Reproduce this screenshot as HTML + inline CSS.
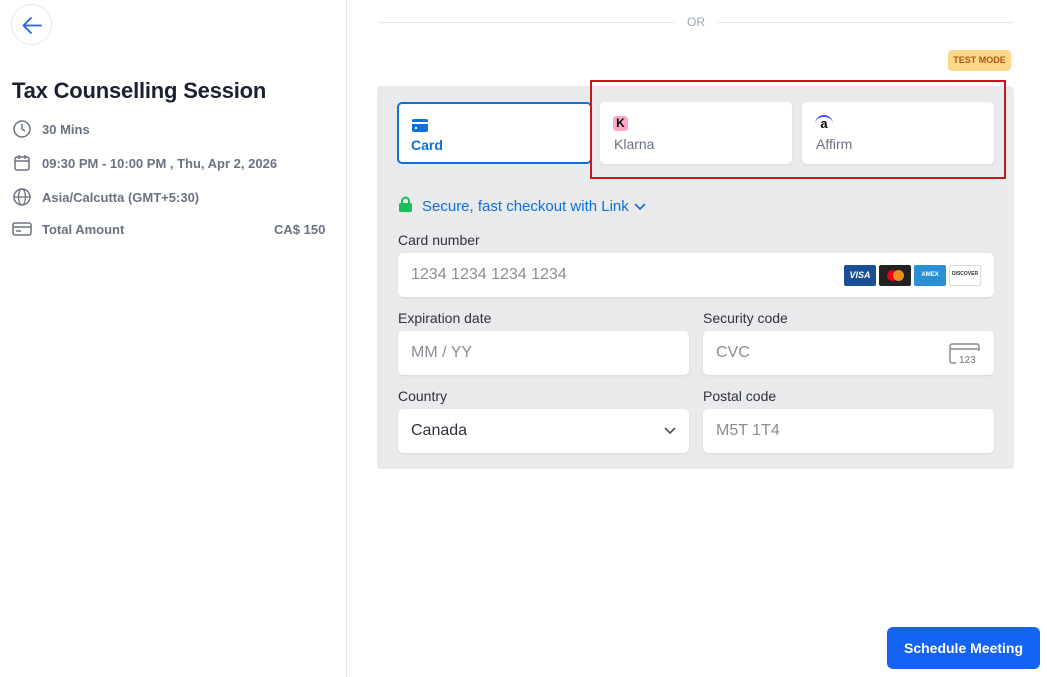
<!DOCTYPE html>
<html><head><style>
*{box-sizing:border-box;margin:0;padding:0}
body{width:1047px;height:677px;background:#fff;font-family:"Liberation Sans",sans-serif;position:relative;overflow:hidden;color:#1a1f2e}
.abs{position:absolute}
.side{left:0;top:0;width:347px;height:677px;border-right:1px solid #e5e7eb}
.back{left:11px;top:4px;width:41px;height:41px;border:1px solid #e5e7eb;border-radius:50%}
.row{left:12px;font-size:13px;color:#6b7280;font-weight:bold;display:flex;align-items:center;gap:10px}
.panel{left:377px;top:86px;width:637px;height:383px;background:#e9eaec;border-radius:4px}
.tab{position:absolute;top:16px;width:192px;height:62px;background:#fff;border-radius:5px;box-shadow:0 1px 2px rgba(0,0,0,.08)}
.tab span{position:absolute;left:14px;top:34px;font-size:14px;color:#6b7280}
.lbl{position:absolute;font-size:14px;color:#30313d}
.inp{position:absolute;height:44px;background:#fff;border-radius:5px;box-shadow:0 1px 2px rgba(0,0,0,.08);font-size:16px;color:#8a8d93;padding:13px 13px}
</style></head><body>
<div class="abs side"></div>
<div class="abs back"><svg width="41" height="41" viewBox="0 0 41 41"><path d="M29 20.5H12M19 13l-7.5 7.5L19 28" stroke="#2563eb" stroke-width="1.8" fill="none" stroke-linecap="round" stroke-linejoin="round"/></svg></div>
<div class="abs" style="left:12px;top:78px;font-size:22px;font-weight:bold;color:#1a2130;letter-spacing:-0.2px">Tax Counselling Session</div>
<div class="abs row" style="top:119px"><svg width="20" height="20" viewBox="0 0 20 20"><circle cx="10" cy="10" r="8" stroke="#6b7280" stroke-width="1.5" fill="none"/><path d="M10 5v5l3 2" stroke="#6b7280" stroke-width="1.5" fill="none"/></svg>30 Mins</div>
<div class="abs row" style="top:153px"><svg width="20" height="20" viewBox="0 0 20 20"><rect x="3" y="4" width="14" height="13" rx="2" stroke="#6b7280" stroke-width="1.5" fill="none"/><path d="M3 8h14M7 2v4M13 2v4" stroke="#6b7280" stroke-width="1.5"/></svg>09:30 PM - 10:00 PM , Thu, Apr 2, 2026</div>
<div class="abs row" style="top:187px"><svg width="20" height="20" viewBox="0 0 20 20"><circle cx="10" cy="10" r="8" stroke="#6b7280" stroke-width="1.5" fill="none"/><ellipse cx="10" cy="10" rx="3.5" ry="8" stroke="#6b7280" stroke-width="1.3" fill="none"/><path d="M2 10h16" stroke="#6b7280" stroke-width="1.3"/></svg>Asia/Calcutta (GMT+5:30)</div>
<div class="abs row" style="top:219px"><svg width="20" height="20" viewBox="0 0 20 20"><rect x="1" y="4" width="18" height="12" rx="2" stroke="#6b7280" stroke-width="1.5" fill="none"/><path d="M1 8h18M4 12h5" stroke="#6b7280" stroke-width="1.5"/></svg>Total Amount</div>
<div class="abs" style="left:274px;top:222px;font-size:13px;font-weight:bold;color:#6b7280">CA$ 150</div>

<div class="abs" style="left:378px;top:22px;width:297px;height:1px;background:#e5e7eb"></div>
<div class="abs" style="left:717px;top:22px;width:297px;height:1px;background:#e5e7eb"></div>
<div class="abs" style="left:687px;top:15px;font-size:12px;color:#9ca3af">OR</div>
<div class="abs" style="left:948px;top:50px;width:63px;height:21px;background:#fcd88a;border-radius:4px;font-size:9px;font-weight:bold;color:#b45309;text-align:center;line-height:21px">TEST MODE</div>

<div class="abs panel">
<div class="tab" style="left:20px;border:2px solid #0f6fde;box-shadow:none;width:195px"><svg style="position:absolute;left:13px;top:15px" width="16" height="13" viewBox="0 0 16 13"><rect x="0" y="0" width="16" height="13" rx="2" fill="#0f6fde"/><rect x="0" y="3" width="16" height="2" fill="#fff"/><rect x="3" y="8" width="2" height="2" fill="#fff"/></svg><span style="color:#0f6fde;font-weight:bold;left:12px;top:33px">Card</span></div>
<div class="tab" style="left:223px"><div style="position:absolute;left:13px;top:14px;width:15px;height:15px;background:#ffa8cd;border-radius:3px;font-size:12px;font-weight:bold;text-align:center;line-height:15px;color:#000">K</div><span>Klarna</span></div>
<div class="tab" style="left:425px"><div style="position:absolute;left:13px;top:13px;width:18px;height:16px;border-top:2px solid #4a4af4;border-radius:9px 9px 0 0;font-size:13px;font-weight:bold;text-align:center;line-height:14px;color:#000">a</div><span>Affirm</span></div>
<svg style="position:absolute;left:22px;top:110px" width="13" height="16" viewBox="0 0 13 16"><path d="M3 7V5a3.5 3.5 0 017 0v2" stroke="#16c15a" stroke-width="2" fill="none"/><rect x="0" y="7" width="13" height="9" rx="1.5" fill="#16c15a"/></svg>
<div style="position:absolute;left:45px;top:112px;font-size:15px;color:#0f6fde">Secure, fast checkout with Link <svg width="14" height="10" viewBox="0 0 14 10"><path d="M2 3l5 5 5-5" stroke="#0f6fde" stroke-width="1.6" fill="none"/></svg></div>
<div class="lbl" style="left:21px;top:146px">Card number</div>
<div class="inp" style="left:21px;top:167px;width:596px">1234 1234 1234 1234
<div style="position:absolute;right:13px;top:12px;display:flex;gap:3px">
<div style="width:32px;height:21px;background:#1a4f96;border-radius:2px;color:#fff;font-size:9px;font-weight:bold;font-style:italic;text-align:center;line-height:21px">VISA</div>
<div style="width:32px;height:21px;background:#222;border-radius:2px;position:relative"><div style="position:absolute;left:8px;top:5px;width:11px;height:11px;border-radius:50%;background:#eb001b"></div><div style="position:absolute;left:14px;top:5px;width:11px;height:11px;border-radius:50%;background:#f79e1b;opacity:.9"></div></div>
<div style="width:32px;height:21px;background:#2b8fd6;border-radius:2px;color:#fff;font-size:6px;font-weight:bold;text-align:center;line-height:21px">AMEX</div>
<div style="width:32px;height:21px;background:#fff;border:1px solid #ddd;border-radius:2px;font-size:5px;font-weight:bold;color:#333;text-align:center;line-height:17px">DISCOVER</div>
</div></div>
<div class="lbl" style="left:21px;top:224px">Expiration date</div>
<div class="inp" style="left:21px;top:245px;width:291px">MM / YY</div>
<div class="lbl" style="left:326px;top:224px">Security code</div>
<div class="inp" style="left:326px;top:245px;width:291px">CVC
<svg style="position:absolute;right:13px;top:12px" width="32" height="22" viewBox="0 0 32 22"><path d="M30 8V3a2 2 0 00-2-2H3a2 2 0 00-2 2v15a2 2 0 002 2h4M1 6h29" stroke="#888" stroke-width="1.4" fill="none"/><text x="10" y="20" font-size="10" fill="#777" font-family="Liberation Sans">123</text></svg></div>
<div class="lbl" style="left:21px;top:302px">Country</div>
<div class="inp" style="left:21px;top:323px;width:291px;color:#30313d">Canada
<svg style="position:absolute;right:12px;top:17px" width="14" height="10" viewBox="0 0 14 10"><path d="M2 2l5 5 5-5" stroke="#555" stroke-width="1.6" fill="none"/></svg></div>
<div class="lbl" style="left:326px;top:302px">Postal code</div>
<div class="inp" style="left:326px;top:323px;width:291px">M5T 1T4</div>
</div>
<div class="abs" style="left:590px;top:80px;width:416px;height:99px;border:2px solid #c8161d"></div>

<div class="abs" style="left:887px;top:627px;width:153px;height:42px;background:#1463f3;border-radius:6px;color:#fff;font-size:14px;font-weight:bold;text-align:center;line-height:42px">Schedule Meeting</div>
</body></html>
